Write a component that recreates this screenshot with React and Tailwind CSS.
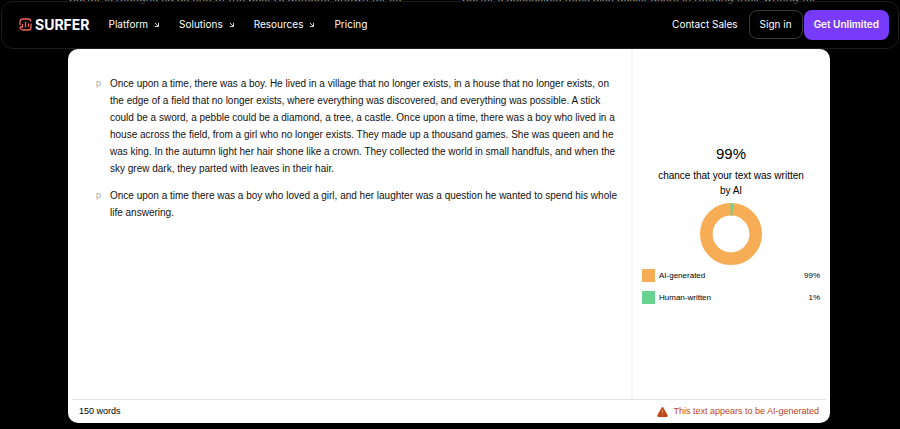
import React from "react";

const menuItems = [
  { label: "Platform", hasMenu: true },
  { label: "Solutions", hasMenu: true },
  { label: "Resources", hasMenu: true },
  { label: "Pricing", hasMenu: false },
];

const paragraphs = [
  "Once upon a time, there was a boy. He lived in a village that no longer exists, in a house that no longer exists, on the edge of a field that no longer exists, where everything was discovered, and everything was possible. A stick could be a sword, a pebble could be a diamond, a tree, a castle. Once upon a time, there was a boy who lived in a house across the field, from a girl who no longer exists. They made up a thousand games. She was queen and he was king. In the autumn light her hair shone like a crown. They collected the world in small handfuls, and when the sky grew dark, they parted with leaves in their hair.",
  "Once upon a time there was a boy who loved a girl, and her laughter was a question he wanted to spend his whole life answering.",
];

const scores = [
  { label: "AI-generated", value: 99, swatch: "bg-[#f6ad55]" },
  { label: "Human-written", value: 1, swatch: "bg-[#68d391]" },
];

const Logo = () => (
  <a href="#" className="flex items-center gap-[3px] text-white">
    <svg width="13" height="13" viewBox="0 0 26 26" fill="none" stroke="#ee6459" strokeWidth="2.6">
      <path d="M2 14V8a6 6 0 0 1 6-6h10a6 6 0 0 1 6 5" />
      <path d="M24 11v7a6 6 0 0 1-6 6H8a6 6 0 0 1-6-6" />
      <path d="M2 18h5v-6M13 8v11M19 11v7" />
    </svg>
    <span className="text-[14px] leading-4 font-bold">SURFER</span>
  </a>
);

const MenuArrow = () => (
  <svg width="6" height="6" viewBox="0 0 6 6" fill="none" stroke="#d4d4d4" className="mt-px">
    <path d="M1 1L4.5 4.5M4.5 0.8V4.5H0.8" />
  </svg>
);

const Navbar = () => (
  <header className="relative z-10 mx-px mt-px flex h-12 items-center rounded-xl border border-[#1c1c1c] bg-black/60 pr-[9px] pb-px pl-[17px] text-[10px] text-white">
    <Logo />
    <nav className="ml-[19px] flex items-center gap-[19px]">
      {menuItems.map((item) => (
        <a key={item.label} href="#" className="flex items-center gap-[6px]">
          {item.label}
          {item.hasMenu && <MenuArrow />}
        </a>
      ))}
    </nav>
    <div className="ml-auto flex items-center">
      <a href="#" className="mr-[11px]">Contact Sales</a>
      <button className="mr-px h-[29px] rounded-lg border border-[#3a3a3a] px-[10px]">
        Sign in
      </button>
      <button className="h-[30px] rounded-lg bg-[#783afb] px-[10px] font-semibold">
        Get Unlimited
      </button>
    </div>
  </header>
);

const Donut = () => (
  <svg viewBox="0 0 62 62" className="mt-[5px] size-[62px]" fill="none">
    <circle cx="31" cy="31" r="24.7" stroke="#f6ad55" strokeWidth="12.6" />
    <path d="M30.6 0 A31 31 0 0 1 33.4 0.1 L32.2 12.7 H30.6Z" fill="#68d391" />
  </svg>
);

const ScorePanel = () => (
  <aside className="flex w-[199px] shrink-0 flex-col items-center border-l-2 border-[#f7f7f7] pt-[95px] pr-[10px] pl-[9px] text-black">
    <h2 className="text-[15px] leading-5">99%</h2>
    <p className="mt-1 w-[152px] text-center text-[10px] leading-[15px]">
      chance that your text was written by AI
    </p>
    <Donut />
    <ul className="mt-1 flex w-full flex-col gap-[9px] text-[8px] leading-3">
      {scores.map((score) => (
        <li key={score.label} className="flex items-center">
          <span className={`mr-1 size-[13px] ${score.swatch}`} />
          <span>{score.label}</span>
          <span className="ml-auto">{score.value}%</span>
        </li>
      ))}
    </ul>
  </aside>
);

const Detector = () => (
  <main className="mx-auto flex min-h-[374px] max-w-[762px] flex-col rounded-[10px] bg-white font-['Liberation_Sans',Arial,sans-serif]">
    <div className="flex grow">
      <article className="flex grow flex-col gap-[10px] pt-[26px] pr-2 pl-7 text-[10px] leading-[17px] text-[#111]">
        {paragraphs.map((text) => (
          <div key={text} className="flex">
            <span className="w-[14px] shrink-0 text-[9px] text-[#a8a8a8]">p</span>
            <p>{text}</p>
          </div>
        ))}
      </article>
      <ScorePanel />
    </div>
    <footer className="mx-1 flex h-6 items-center justify-between border-t border-[#e4e4e4] px-[7px] text-[9px]">
      <span>150 words</span>
      <span className="flex items-center gap-[5px] text-[#bf4618]">
        <svg width="11" height="10" viewBox="0 0 22 20">
          <path d="M9 2a2 2 0 0 1 4 0l8 14a2.5 2.5 0 0 1-2 4H3a2.5 2.5 0 0 1-2-4z" fill="currentColor" />
          <path d="M11 6v6M11 14.5v2" stroke="#e59a72" strokeWidth="2" />
        </svg>
        This text appears to be AI-generated
      </span>
    </footer>
  </main>
);

const App = () => {
  return (
    <div className="relative min-h-screen overflow-hidden bg-black pb-[6px] font-[Inter,sans-serif]">
      <div className="absolute inset-x-0 -top-[9px] grid grid-cols-[393px_1fr] pl-[69px] text-[11px] leading-[15px] text-[#9a9a9a]">
        <p>Surfer is recognized as one of the best AI detector known for its</p>
        <p>Surfer's accessible tools also assist users in refining their writing for</p>
      </div>
      <Navbar />
      <div className="pr-[2px]">
        <Detector />
      </div>
    </div>
  );
};

export default App;
